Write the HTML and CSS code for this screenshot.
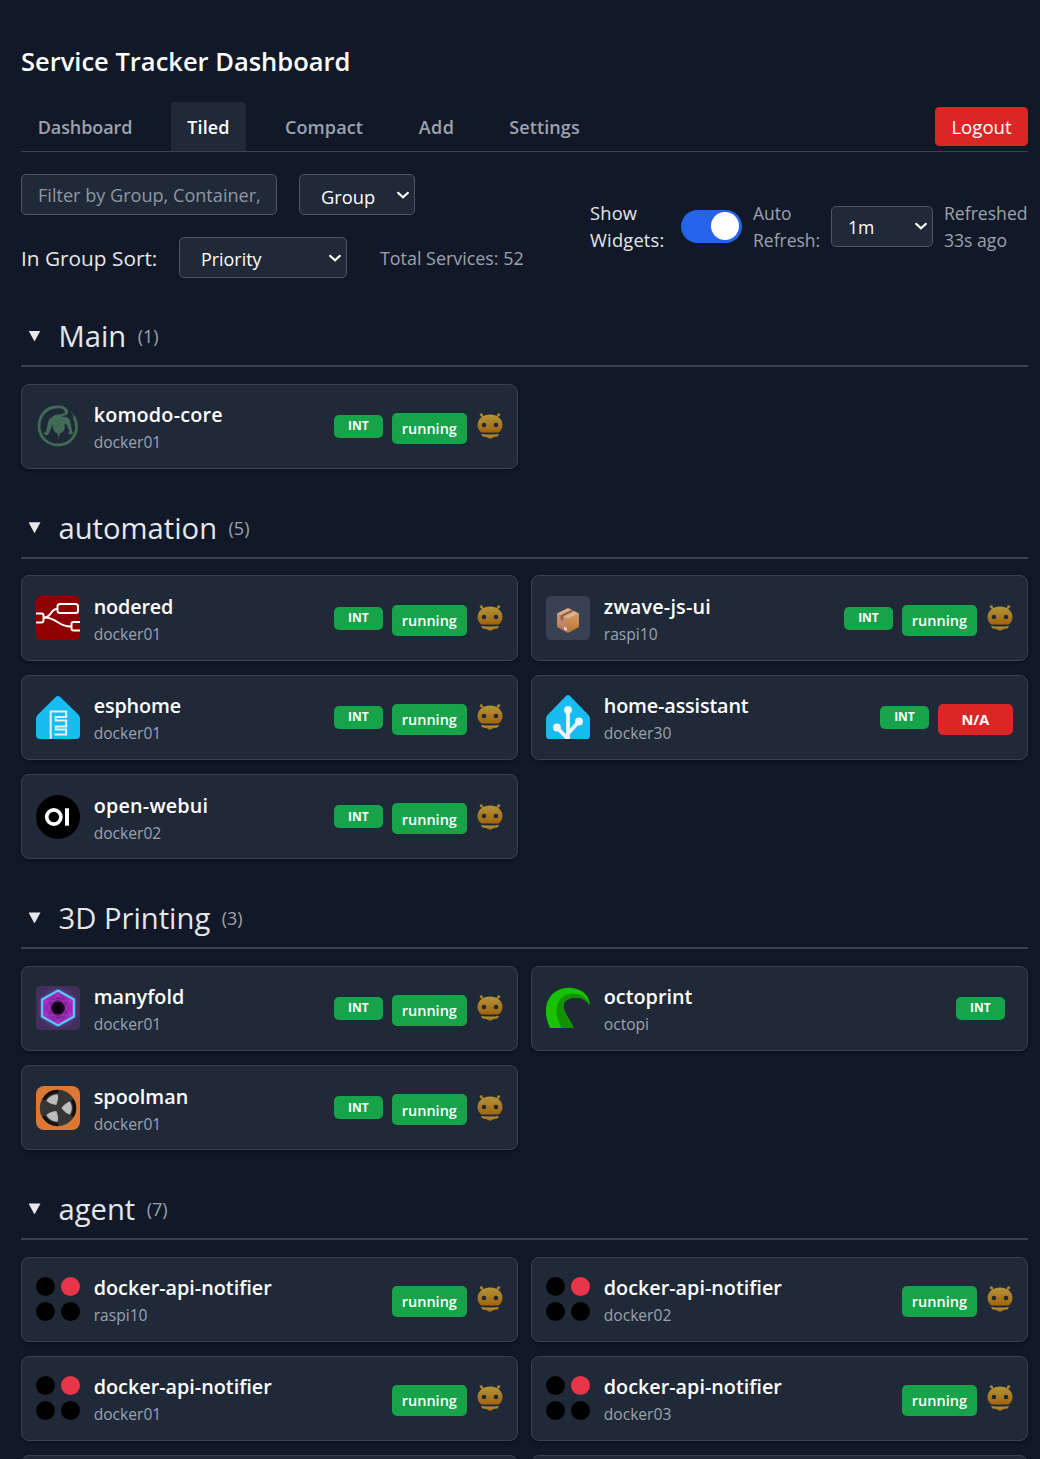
FILE: index.html
```html
<!DOCTYPE html>
<html lang="en">
<head>
<meta charset="utf-8">
<title>Service Tracker Dashboard</title>
<link rel="stylesheet" href="styles.css">
</head>
<body>
<svg class="sprite" aria-hidden="true">
  <defs>
    <linearGradient id="gold" x1="0" y1="0" x2="0" y2="1"><stop offset="0" stop-color="#b3953a"/><stop offset="1" stop-color="#a3640f"/></linearGradient>
    <radialGradient id="core"><stop offset="0" stop-color="#000"/><stop offset=".3" stop-color="#14031b"/><stop offset=".62" stop-color="#8a25a8"/><stop offset="1" stop-color="#b02fce"/></radialGradient>
    <radialGradient id="halo"><stop offset=".5" stop-color="#5a48a0"/><stop offset="1" stop-color="#432f5c"/></radialGradient>
    <linearGradient id="boxl" x1="0" y1="0" x2="0" y2="1"><stop offset="0" stop-color="#cf9873"/><stop offset="1" stop-color="#ae7358"/></linearGradient>
    <linearGradient id="boxr" x1="0" y1="0" x2="0" y2="1"><stop offset="0" stop-color="#d99b62"/><stop offset="1" stop-color="#b9742f"/></linearGradient>
  </defs>
  <symbol id="bot" viewBox="0 0 26 26">
    <g fill="url(#gold)">
      <circle cx="4.300" cy="1.800" r="1.600"/><circle cx="21.700" cy="1.800" r="1.600"/>
      <path d="M4 2.500 5.500 2 8 4.500 6.500 6zM22 2.500 20.500 2 18 4.500 19.500 6z"/>
      <path d="M13 1.500C6 1.500.5 6 .5 12c0 3.500 1.800 6 4 7.500h17c2.200-1.500 4-4 4-7.500C25.500 6 20 1.500 13 1.500z"/>
      <path d="M4 21q9 1 18 0l-1.500 2.500-3.500.5-4 2-4-2-3.500-.5z"/>
    </g>
    <circle cx="7" cy="12" r="2.300" fill="#202938"/><circle cx="19" cy="12" r="2.300" fill="#202938"/>
  </symbol>
  <symbol id="komodo" viewBox="0 0 44 44">
    <path d="M30.500 8.500C30 4 25 2.500 20 3 10 3.500 3 12 3 22c0 11 8.500 19 19 19s18.500-8 18.500-18c0-4-.8-7-2.500-10" fill="none" stroke="#426b55" stroke-width="2.800"/>
    <path d="M35 7.500c3.500 3.500 6.500 9 6.800 15l-2.600.5c0-6-1.500-11-4.200-15.500zM25 1.800c5 1 8 4.500 7 7.500-1 2.500-5 2.500-7 3.200l5 .5c3 .5 4 3 4.500 6l1.500 7.500 1 3.500-4 .2-.5-2.500 1-.5-2.500-6-1.500-2-1 1.500.3 4-2.300 3.500-2.500 1-1.200 5-1.300-5-2.500-1-2-3.500.2-3.500-1.700 1.500-1.500 4-1 3-2.500 1.800-3-1.500.5-1.500 2-.5 1.500-7c.5-4 1.500-6.500 4-7.500l3.500-2.500 7-1c3-.5 4.500-2.500 2-4.500z" fill="#426b55"/>
  </symbol>
  <symbol id="nodered" viewBox="0 0 44 44">
    <rect width="44" height="44" rx="4.500" fill="#8f0000"/>
    <g fill="none" stroke="#fff" stroke-width="2">
      <rect x="21.500" y="8" width="20.500" height="9" rx="2.500"/>
      <path d="M0 17.500h5.500a2 2 0 0 1 2 2v5a2 2 0 0 1-2 2H0M44 26h-6.500a2 2 0 0 0-2 2v4.500a2 2 0 0 0 2 2H44M8 21.500c8 0 6-8.500 13-8.500M8 21.500c14 0 13 9 27 9" />
    </g>
  </symbol>
  <symbol id="esphome" viewBox="0 0 44 44">
    <path d="M20 1.800a3 3 0 0 1 4 0l18 17.500q2 2 2 5V40a4 4 0 0 1-4 4H4a4 4 0 0 1-4-4V24.500q0-3 2-5z" fill="#18bcf2"/>
    <path d="M14.700 44V16.500h15.500v5.500H19.800v3.500h10.400v6H19.800v3h10.400v5H18.500" fill="none" stroke="#e9f0f5" stroke-width="2"/>
  </symbol>
  <symbol id="hass" viewBox="0 0 44 44">
    <path d="M20 1a3 3 0 0 1 4 0l18 18.500q2 2 2 5V41a3 3 0 0 1-3 3H3a3 3 0 0 1-3-3V24.500q0-3 2-5z" fill="#18bcf2"/>
    <path d="M22 15v29M11 32.500l11 11.500M33 26.500 22 38.500" stroke="#f2f4f9" stroke-width="3.800" fill="none"/>
    <g fill="#f2f4f9"><circle cx="22" cy="15" r="3.900"/><circle cx="11" cy="32.500" r="3.900"/><circle cx="33" cy="26.500" r="3.900"/></g>
  </symbol>
  <symbol id="zwave" viewBox="0 0 44 44">
    <rect width="44" height="44" rx="4.500" fill="#374151"/>
    <path d="M11 17.500 22 23v14l-11-6z" fill="url(#boxl)"/>
    <path d="M33 17.500 22 23v14l11-6z" fill="url(#boxr)"/>
    <path d="M22 12l11 5.500L22 23l-11-5.500z" fill="#e0b184"/>
    <path d="M14.500 19.300 25.500 13.700l2.500 1.300-11 5.500v4.500l-2.500-1.500z" fill="#91604c"/>
    <path d="M18 30.500l3 1.500v3l-3-1.500z" fill="#e3cbd5"/>
  </symbol>
  <symbol id="webui" viewBox="0 0 44 44">
    <circle cx="22" cy="22" r="22"/>
    <circle cx="17.800" cy="22" r="7.100" fill="none" stroke="#fff" stroke-width="3.700"/>
    <rect x="29" y="13.300" width="4" height="17.400" fill="#fff"/>
  </symbol>
  <symbol id="manyfold" viewBox="0 0 44 44">
    <rect width="44" height="44" rx="4.500" fill="url(#halo)"/>
    <path d="M22 4.500 38 13.500v17L22 39.500 6 30.500v-17z" fill="url(#core)" stroke="#42a4dc" stroke-width="3" stroke-opacity=".55"/>
    <path d="M22 5.500 37 14v16L22 38.500 7 30V14zM22 8 34.500 29h-25zM22 36 9.500 15h25z" fill="none" stroke="#cf3ce0" stroke-width=".8" stroke-opacity=".75"/>
    <path d="M22 4.500 38 13.500v17L22 39.500 6 30.500v-17z" fill="none" stroke="#4fe0f5" stroke-width="1.500"/>
    <circle cx="22" cy="22" r="8.500" fill="none" stroke="#c644dc" stroke-width=".6"/>
  </symbol>
  <symbol id="octo" viewBox="0 0 44 44">
    <path d="M4 42C-1 31-2 20 4 11 10 3 20 .5 29 2.500 38 4.500 43 10 44 19c-4-5-9-8-15-7.500-8 .5-12 4.500-11.500 9.500.5 7 7 12 10 21z" fill="#17c300"/>
    <path d="M15.500 42c-3-7-6.500-14-4.500-22 2.500-9 10-13 18-12 8 .5 13 5 15 11-4-5-9-8-15-7.500-8 .5-12 4.500-11.500 9.500.5 7 7 12 10 21z" fill="#149100"/>
  </symbol>
  <symbol id="spool" viewBox="0 0 44 44">
    <rect width="44" height="44" rx="8" fill="#dc7734"/>
    <circle cx="22" cy="22" r="18.200" fill="#363636"/>
    <g id="blade"><path d="M36.300 13.700A16.500 16.500 0 0 1 36.300 30.300" fill="none" stroke="#101010" stroke-width="3.200"/><path d="M25.500 22q4-5.500 8.500-6.500a13.500 13.500 0 0 1 0 13q-4.500-1-8.500-6.500z" fill="#bdbdbd"/></g>
    <use href="#blade" transform="rotate(120 22 22)"/><use href="#blade" transform="rotate(240 22 22)"/>
  </symbol>
  <symbol id="dots" viewBox="0 0 44 44">
    <circle cx="9.500" cy="9.500" r="9.500"/><circle cx="34.500" cy="9.500" r="9.500" fill="#e93549"/><circle cx="9.500" cy="34.500" r="9.500"/><circle cx="34.500" cy="34.500" r="9.500"/>
  </symbol>
  <symbol id="chev" viewBox="0 0 14 8"><path d="M1.500 1.300 7 6.300l5.500-5" fill="none" stroke="#fff" stroke-width="2.200"/></symbol>
</svg>

<h1>Service Tracker Dashboard</h1>
<nav class="tabs">
  <a class="tab">Dashboard</a><a class="tab active">Tiled</a><a class="tab">Compact</a><a class="tab">Add</a><a class="tab">Settings</a>
  <button class="logout">Logout</button>
</nav>

<div class="controls">
  <div class="filters">
    <input class="field" type="text" placeholder="Filter by Group, Container, or Stack">
    <label class="select group"><select><option>Group</option></select><svg><use href="#chev"/></svg></label>
    <span class="sort-label">In Group Sort:</span>
    <label class="select sort"><select><option>Priority</option></select><svg><use href="#chev"/></svg></label>
    <span class="total">Total Services: 52</span>
  </div>
  <div class="refresh">
    <span class="widgets">Show<br>Widgets:</span>
    <span class="toggle"><i></i></span>
    <span class="auto">Auto<br>Refresh:</span>
    <label class="select interval"><select><option>1m</option></select><svg><use href="#chev"/></svg></label>
    <span class="ago">Refreshed<br>33s ago</span>
  </div>
</div>

<section>
  <h2><i class="caret"></i>Main<small>(1)</small></h2>
  <div class="grid">
    <article class="card"><svg class="logo"><use href="#komodo"/></svg><div class="info"><b class="wide">komodo-core</b><span>docker01</span></div><em class="int">INT</em><em class="state">running</em><svg class="bot"><use href="#bot"/></svg></article>
  </div>
</section>
<section>
  <h2><i class="caret"></i>automation<small>(5)</small></h2>
  <div class="grid">
    <article class="card"><svg class="logo"><use href="#nodered"/></svg><div class="info"><b class="tight">nodered</b><span>docker01</span></div><em class="int">INT</em><em class="state">running</em><svg class="bot"><use href="#bot"/></svg></article>
    <article class="card"><svg class="logo"><use href="#zwave"/></svg><div class="info"><b class="wide">zwave-js-ui</b><span>raspi10</span></div><em class="int">INT</em><em class="state">running</em><svg class="bot"><use href="#bot"/></svg></article>
    <article class="card"><svg class="logo"><use href="#esphome"/></svg><div class="info"><b class="tight">esphome</b><span>docker01</span></div><em class="int">INT</em><em class="state">running</em><svg class="bot"><use href="#bot"/></svg></article>
    <article class="card"><svg class="logo"><use href="#hass"/></svg><div class="info"><b class="tight">home-assistant</b><span>docker30</span></div><em class="int">INT</em><em class="state down">N/A</em></article>
    <article class="card"><svg class="logo"><use href="#webui"/></svg><div class="info"><b class="wide">open-webui</b><span>docker02</span></div><em class="int">INT</em><em class="state">running</em><svg class="bot"><use href="#bot"/></svg></article>
  </div>
</section>
<section>
  <h2><i class="caret"></i>3D Printing<small>(3)</small></h2>
  <div class="grid">
    <article class="card"><svg class="logo"><use href="#manyfold"/></svg><div class="info"><b>manyfold</b><span>docker01</span></div><em class="int">INT</em><em class="state">running</em><svg class="bot"><use href="#bot"/></svg></article>
    <article class="card"><svg class="logo"><use href="#octo"/></svg><div class="info"><b>octoprint</b><span>octopi</span></div><em class="int last">INT</em></article>
    <article class="card"><svg class="logo"><use href="#spool"/></svg><div class="info"><b>spoolman</b><span>docker01</span></div><em class="int">INT</em><em class="state">running</em><svg class="bot"><use href="#bot"/></svg></article>
  </div>
</section>
<section>
  <h2><i class="caret"></i>agent<small>(7)</small></h2>
  <div class="grid">
    <article class="card"><svg class="logo"><use href="#dots"/></svg><div class="info"><b>docker-api-notifier</b><span>raspi10</span></div><em class="state">running</em><svg class="bot"><use href="#bot"/></svg></article>
    <article class="card"><svg class="logo"><use href="#dots"/></svg><div class="info"><b>docker-api-notifier</b><span>docker02</span></div><em class="state">running</em><svg class="bot"><use href="#bot"/></svg></article>
    <article class="card"><svg class="logo"><use href="#dots"/></svg><div class="info"><b>docker-api-notifier</b><span>docker01</span></div><em class="state">running</em><svg class="bot"><use href="#bot"/></svg></article>
    <article class="card"><svg class="logo"><use href="#dots"/></svg><div class="info"><b>docker-api-notifier</b><span>docker03</span></div><em class="state">running</em><svg class="bot"><use href="#bot"/></svg></article>
    <article class="card"></article>
    <article class="card"></article>
  </div>
</section>
</body>
</html>
```
FILE: styles.css
```css
* { box-sizing: border-box; }
html { background: #111827; overflow: hidden; }
body { margin: 0; height: 1459px; overflow: hidden; padding: 42px 12px 0 21px; background: #111827; color: #e5e7eb; font: 17.900px/27px "Open Sans", "Noto Sans", sans-serif; }
.sprite { position: absolute; width: 0; height: 0; }
h1 { margin: 0 0 21px; font-size: 25.500px; line-height: 39px; font-weight: 600; color: #fff; }

.tabs { display: flex; align-items: flex-start; gap: 22px; height: 50px; border-bottom: 1px solid #374151; }
.tab { height: 49px; line-height: 50px; text-align: center; font-size: 18px; font-weight: 600; letter-spacing: .1px; color: #9ca3af; border-radius: 4px 4px 0 0; }
.tab:nth-child(1) { width: 128px; letter-spacing: -.1px; }
.tab:nth-child(2) { width: 75px; }
.tab:nth-child(3) { width: 112px; }
.tab:nth-child(4) { width: 69px; letter-spacing: .4px; }
.tab:nth-child(5) { width: 103px; }
.tab.active { background: #1f2937; color: #fff; }
.logout { margin: 5px 0 0 auto; width: 93px; height: 39px; border: 0; border-radius: 4.400px; background: #dc2626; color: #fff; font: inherit; font-size: 18.600px; padding: 0 0 1px; }

.controls { display: flex; align-items: center; justify-content: space-between; height: 104px; margin-top: 22px; }
.filters { display: flex; flex-wrap: wrap; align-items: center; gap: 22px; width: 540px; }
.field, select { height: 41px; border: 1px solid #4b5563; border-radius: 5px; background: #1f2937; color: #fff; font: inherit; }
.field { width: 256px; padding: 1px 14px 0 16px; font-size: 18.100px; }
.field::placeholder { color: #8f97a4; opacity: 1; }
.select { display: grid; align-items: center; }
.select > * { grid-area: 1 / 1; }
.select svg { width: 14px; height: 8px; justify-self: end; margin-right: 5px; pointer-events: none; }
select { appearance: none; width: 100%; padding: 3px 20px 0 21px; }
.group { width: 116px; margin-right: 100px; }
.group select { font-size: 18.300px; }
.sort { width: 168px; }
.interval { width: 102px; }
.interval select { padding-left: 16px; }
.sort-label { width: 136px; padding-top: 1px; font-size: 20.800px; white-space: nowrap; }
.total { margin-left: 11px; padding-top: 1px; color: #9ca3af; }
.refresh { display: flex; align-items: center; gap: 11px; white-space: nowrap; color: #9ca3af; font-size: 17.600px; }
.widgets { width: 80px; color: #e5e7eb; font-size: 18.300px; letter-spacing: .2px; }
.auto { width: 67px; padding-top: 2px; font-size: 17.500px; }
.ago { width: 84px; padding-top: 2px; }
.toggle { width: 61px; height: 33px; padding: 2px 3px 0 0; border-radius: 17px; background: #2563eb; }
.toggle i { display: block; width: 28px; height: 28px; margin-left: auto; border-radius: 50%; background: #fff; }

section { margin-top: 35.600px; }
.controls + section { margin-top: 35px; }
h2 { display: flex; align-items: center; height: 54px; margin: 0 0 16.600px; padding-bottom: 5px; border-bottom: 2px solid #374151; font-size: 29.200px; font-weight: 400; }
h2 small { margin-left: 11.500px; font-size: 18px; color: #9ca3af; }
.caret { width: 12px; height: 11px; margin: 0 18px 1px 7.500px; background: #e5e7eb; clip-path: polygon(0 0, 100% 0, 50% 100%); }

.grid { display: grid; grid-template-columns: 1fr 1fr; gap: 13.600px 13.200px; }
.card { display: flex; align-items: center; height: 85.600px; padding: 0 14px; border: 1px solid #374151; border-radius: 8px; background: #1f2937; box-shadow: 0 2px 4px rgba(0, 0, 0, .3); }
.logo { width: 44px; height: 44px; flex: none; }
.info { margin: 0 auto 0 13.700px; padding-top: 5px; display: grid; }
.info b { font-size: 19.800px; line-height: 28px; font-weight: 600; color: #fff; }
.info .wide { letter-spacing: .2px; }
.info .tight { letter-spacing: -.15px; }
.info span { font-size: 15.600px; line-height: 27px; color: #9ca3af; }
em { display: grid; place-items: center; font-style: normal; font-weight: 600; color: #fff; background: #16a34a; border-radius: 5px; }
.int { width: 49.300px; height: 23px; font-size: 12px; font-weight: 700; line-height: 22px; margin-right: 8.700px; }
.int.last { margin-right: 8px; }
.state { width: 75.200px; height: 31px; margin-top: 4px; padding-top: 2px; font-size: 14.500px; line-height: 24px; }
.down { background: #dc2626; font-weight: 700; }
.bot { width: 26px; height: 26px; margin-left: 10px; }
```
